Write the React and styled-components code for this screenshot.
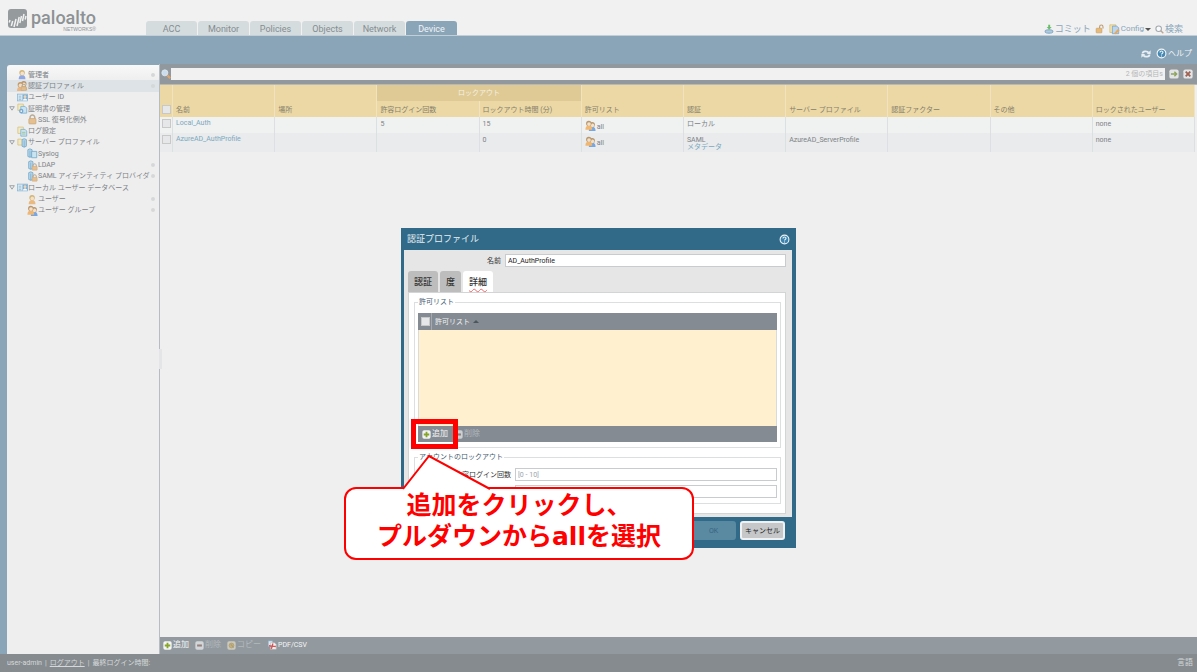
import React, { useState } from 'react';
import styled, { createGlobalStyle } from 'styled-components';

const navTabs = ['ACC', 'Monitor', 'Policies', 'Objects', 'Network', 'Device'];

const treeItems = [
  { label: '管理者', icon: 'admin', dot: true },
  { label: '認証プロファイル', icon: 'authProfile', dot: true },
  { label: 'ユーザー ID', icon: 'card' },
  { label: '証明書の管理', icon: 'certs', open: true },
  { label: 'SSL 復号化例外', icon: 'lock', child: true },
  { label: 'ログ設定', icon: 'logs' },
  { label: 'サーバー プロファイル', icon: 'servers', open: true },
  { label: 'Syslog', icon: 'syslog', child: true },
  { label: 'LDAP', icon: 'serverLock', child: true, dot: true },
  { label: 'SAML アイデンティティ プロバイダ', icon: 'serverLock', child: true, dot: true },
  { label: 'ローカル ユーザー データベース', icon: 'card', open: true },
  { label: 'ユーザー', icon: 'user', child: true, dot: true },
  { label: 'ユーザー グループ', icon: 'group', child: true, dot: true },
];

const profiles = [
  { name: 'Local_Auth', attempts: '5', time: '15', auth: 'ローカル', server: '', locked: 'none' },
  { name: 'AzureAD_AuthProfile', attempts: '', time: '0', auth: 'SAML', meta: 'メタデータ', server: 'AzureAD_ServerProfile', locked: 'none' },
];

const Person = ({ x = 0, y = 0, hair = '#c9a04a', body = '#6f8fe0' }) => (
  <g transform={`translate(${x} ${y})`}>
    <path d="M.5 11.500C.5 8 2 6.500 4.500 6.500S8.500 8 8.500 11.500z" fill={body} />
    <circle cx="4.500" cy="4" r="3.200" fill={hair} />
    <circle cx="4.700" cy="4.800" r="2.200" fill="#f6dcbc" />
  </g>
);

const Padlock = ({ x = 0, y = 0 }) => (
  <g transform={`translate(${x} ${y})`}>
    <path d="M1.500 4V2.500a2 2 0 0 1 4 0V4" fill="none" stroke="#a8957a" strokeWidth="1.200" />
    <rect x=".5" y="3.500" width="6" height="4.500" rx=".6" fill="#e3b070" stroke="#b98f58" strokeWidth=".6" />
  </g>
);

const Server = ({ x = 0, y = 0 }) => (
  <g transform={`translate(${x} ${y})`}>
    <path d="M.5 1.500 3 .5l2.500 1v8L3 10.500l-2.500-1z" fill="#a9d0ea" stroke="#3f8cba" strokeWidth=".9" />
    <path d="M3 2.500v8" stroke="#3f8cba" strokeWidth=".8" />
  </g>
);

const Sheets = () => (
  <g strokeWidth=".9">
    <path d="M.5.8h6.500v7.500H.5z" fill="#f7e9b4" stroke="#cdb258" />
    <path d="M4 3.500h5l2 2v6H4z" fill="#bfe0f2" stroke="#4f97c2" />
  </g>
);

const drawings = {
  admin: <Person x={1} />,
  user: <Person x={1} body="#e8a85c" />,
  authProfile: <><Person x={3} hair="#a87a44" body="#e8a050" /><Person x={-1} y={1} hair="#b98247" body="#f0a860" /><Padlock x={4} y={4} /></>,
  group: <><Person x={3.500} y={1} hair="#a87a44" body="#4f90e0" /><Person x={-.5} y={-.5} hair="#a87a44" body="#f0a548" /></>,
  card: (
    <>
      <rect x="0" y="2" width="12" height="8" fill="#d8eaf5" stroke="#6aa5cd" strokeWidth=".9" />
      <path d="M1.500 4.500h3M1.500 6.500h3M1.500 8.500h3" stroke="#5a9cc8" strokeWidth=".8" />
      <rect x="6" y="2.500" width="6" height="7" fill="#5796c4" />
      <circle cx="9" cy="5" r="1.700" fill="#f0cfa8" />
      <path d="M6.500 9.500c.3-3 4.700-3 5 0z" fill="#fff" />
    </>
  ),
  certs: <><Sheets /><circle cx="4.500" cy="9" r="2.600" fill="#4f93cb" /><circle cx="4.500" cy="9" r="1" fill="#fff" /></>,
  logs: <><Sheets /><path d="M5.500 7h4M5.500 9h4" stroke="#7fb46f" strokeWidth="1" /></>,
  lock: <g transform="translate(1 0) scale(1.400)"><Padlock /></g>,
  servers: <><path d="M.5 2h4l1 1h5v6h-10z" fill="#f7e6b0" stroke="#cdb258" strokeWidth=".9" /><Server x={5} y={1} /></>,
  syslog: <><Server /><path d="M5 3.500h6v7.500H5z" fill="#bfe0f2" stroke="#3f8cba" strokeWidth=".9" /></>,
  serverLock: <><Server x={1} /><Padlock x={5} y={3.500} /></>,
  add: (
    <>
      <rect x="0" y="0" width="12" height="12" rx="2.500" fill="#fff" />
      <path d="M6 2v8M2 6h8" stroke="#86a81e" strokeWidth="2.600" />
    </>
  ),
  remove: (
    <>
      <rect x="0" y="0" width="12" height="12" rx="2.500" fill="#fff" />
      <rect x="2.500" y="4.500" width="7" height="3" fill="#9a7467" />
    </>
  ),
  copy: (
    <>
      <rect x="0" y="0" width="12" height="12" rx="2.500" fill="#f4ead0" />
      <circle cx="6" cy="6" r="3.500" fill="#e8bd55" stroke="#b89b5c" />
      <path d="M5 4l4 5" stroke="#8e877a" />
    </>
  ),
  pdf: (
    <>
      <path d="M1 .5h6v8H1z" fill="#e8f1f7" stroke="#7ba5c4" strokeWidth=".9" />
      <path d="M4 3h5l2.500 2v6.500H4z" fill="#fff" stroke="#b8b8b8" strokeWidth=".7" />
      <path d="M2 7c3 1 5 0 9 1M7 4c0 3-1 5-2 7" stroke="#dc4c4c" strokeWidth="1.800" fill="none" />
    </>
  ),
  go: (
    <>
      <rect x="0" y="0" width="12" height="12" rx="2.500" fill="#fff" />
      <path d="M2 6h7M6.500 3 9.500 6l-3 3" stroke="#8ea84b" strokeWidth="1.800" fill="none" />
    </>
  ),
  clear: (
    <>
      <rect x="0" y="0" width="12" height="12" rx="2.500" fill="#fff" />
      <path d="M3 3l6 6M9 3l-6 6" stroke="#a3503c" strokeWidth="2.400" />
    </>
  ),
  commit: (
    <>
      <path d="M1 8.500c0-2 10-2 10 0v1.500c0 2-10 2-10 0z" fill="#a8c6de" stroke="#5c8db3" strokeWidth="1" />
      <path d="M5 .5h2.500v3H9.500L6.200 7 3 3.500h2z" fill="#5cb85a" />
    </>
  ),
  unlock: (
    <>
      <path d="M5.500 5V3a2.200 2.200 0 0 1 4.400 0v2.500" fill="none" stroke="#b9925f" strokeWidth="1.400" />
      <rect x="1" y="5" width="7.500" height="6" rx=".8" fill="#e5b56c" stroke="#b98a4b" strokeWidth=".7" />
    </>
  ),
  config: (
    <>
      <path d="M.5.5h7v9h-7z" fill="#f6e5a7" stroke="#cfae54" strokeWidth=".8" />
      <path d="M3.500 2h5l2.500 2v7H3.500z" fill="#b6d2ec" stroke="#5c92c0" strokeWidth=".8" />
      <path d="M5.500 10.500 10 5.500l2 1.500-4.500 4.500z" fill="#e8a04a" />
    </>
  ),
  find: (
    <>
      <path d="M7.500 7.500 11.500 11.500" stroke="#b99f86" strokeWidth="2" />
      <circle cx="4.800" cy="4.800" r="4" fill="#fafcfe" stroke="#9aa0a6" strokeWidth="1.500" />
    </>
  ),
  lens: (
    <>
      <circle cx="4.500" cy="4.500" r="3.900" fill="#cfe5f8" stroke="#e6edf2" strokeWidth="1.200" />
      <path d="M7.800 7.800 11.500 11.500" stroke="#e8a468" strokeWidth="2.800" />
    </>
  ),
  refresh: (
    <g fill="none" stroke="#f4f7f9" strokeWidth="2.400">
      <path d="M1.500 5.500c0-3.500 6-4 8-1M10.500 6.500c0 3.500-6 4-8 1" />
      <path d="M12 1v5H7zM0 11V6h5z" fill="#f4f7f9" stroke="none" />
    </g>
  ),
  help: (
    <>
      <circle cx="6" cy="6" r="5.200" fill="#3d86b4" stroke="#fff" strokeWidth="1.300" />
      <path d="M4.200 4.800c0-2.400 3.600-2.300 3.600-.2C7.800 6 6 5.900 6 7.300M6 8.400v1.200" fill="none" stroke="#fff" strokeWidth="1.300" />
    </>
  ),
};

const Icon = ({ name, size = 10, faded }) => (
  <Glyph width={size} height={size} viewBox="-0.5 -0.5 13 13" $faded={faded} aria-hidden="true">
    {drawings[name]}
  </Glyph>
);

export default function App() {
  const [selected, setSelected] = useState('認証プロファイル');
  const [profileName, setProfileName] = useState('AD_AuthProfile');

  return (
    <Page>
      <GlobalStyle />
      <Header>
        <Logo>
          <svg width="20" height="20" viewBox="0 0 20 20" aria-hidden="true">
            <rect width="19" height="19" rx="3" fill="#959a9d" />
            <path d="M1.200 13.500l.8-2.500M3.300 17l1.400-5M6 18l2-8M9 17l2.200-9M11.800 14l1.700-7M14.500 12l1.500-7M17.200 10.500l.8-3.500" stroke="#f1f1f1" strokeWidth="1.500" fill="none" />
          </svg>
          <Brand>paloalto<BrandSub>NETWORKS®</BrandSub></Brand>
        </Logo>
        <NavTabs>
          {navTabs.map(tab => (
            <NavTab key={tab} $active={tab === 'Device'}>{tab}</NavTab>
          ))}
        </NavTabs>
        <HeaderTools>
          <ToolLink href="#commit"><Icon name="commit" />コミット</ToolLink>
          <ToolLink href="#locks" aria-label="ロック"><Icon name="unlock" /></ToolLink>
          <ToolLink href="#config"><Icon name="config" size={11} /><ConfigText>Config</ConfigText><Caret /></ToolLink>
          <ToolLink href="#search"><Icon name="find" size={9} />検索</ToolLink>
        </HeaderTools>
      </Header>

      <Band>
        <BandButton aria-label="更新"><Icon name="refresh" /></BandButton>
        <BandButton><Icon name="help" size={11} />ヘルプ</BandButton>
      </Band>

      <Workspace>
        <Sidebar>
          <Tree>
            {treeItems.map(item => (
              <TreeItem key={item.label} $selected={item.label === selected} $child={item.child}>
                <Arrow>{item.open && <svg width="6" height="5" viewBox="0 0 6 5"><path d="M.7.7h4.600L3 4.200z" fill="none" stroke="#8b9196" strokeWidth=".8" /></svg>}</Arrow>
                <TreeButton onClick={() => setSelected(item.label)}>
                  <Icon name={item.icon} size={11} faded />
                  {item.label}
                </TreeButton>
                {item.dot && <Dot />}
              </TreeItem>
            ))}
          </Tree>
        </Sidebar>
        <Splitter><Handle /></Splitter>

        <Main>
          <SearchBar>
            <Icon name="lens" />
            <SearchBox>
              <SearchInput aria-label="検索フィルタ" />
              <Count>2 個の項目s</Count>
            </SearchBox>
            <SearchActions>
              <IconButton aria-label="適用"><Icon name="go" faded /></IconButton>
              <IconButton aria-label="クリア"><Icon name="clear" faded /></IconButton>
            </SearchActions>
          </SearchBar>

          <TableArea>
            <Table>
              <colgroup><CheckCol /><col span="10" /></colgroup>
              <thead>
                <tr>
                  <Th rowSpan="2" $check><Check type="checkbox" aria-label="すべて選択" /></Th>
                  <Th rowSpan="2">名前</Th>
                  <Th rowSpan="2">場所</Th>
                  <GroupTh colSpan="2">ロックアウト</GroupTh>
                  <Th rowSpan="2">許可リスト</Th>
                  <Th rowSpan="2">認証</Th>
                  <Th rowSpan="2">サーバー プロファイル</Th>
                  <Th rowSpan="2">認証ファクター</Th>
                  <Th rowSpan="2">その他</Th>
                  <Th rowSpan="2">ロックされたユーザー</Th>
                </tr>
                <tr>
                  <Th>許容ログイン回数</Th>
                  <Th>ロックアウト時間 (分)</Th>
                </tr>
              </thead>
              <tbody>
                {profiles.map(row => (
                  <Row key={row.name}>
                    <Td $check><Check type="checkbox" aria-label={row.name} /></Td>
                    <Td><CellLink href="#profile">{row.name}</CellLink></Td>
                    <Td />
                    <Td>{row.attempts}</Td>
                    <Td>{row.time}</Td>
                    <Td><AllowAll><Icon name="group" size={11} faded />all</AllowAll></Td>
                    <Td>{row.auth}{row.meta && <CellLink href="#metadata">{row.meta}</CellLink>}</Td>
                    <Td>{row.server}</Td>
                    <Td />
                    <Td />
                    <Td>{row.locked}</Td>
                  </Row>
                ))}
              </tbody>
            </Table>
          </TableArea>

          <Toolbar>
            <ToolbarButton><Icon name="add" size={9} />追加</ToolbarButton>
            <ToolbarButton disabled><Icon name="remove" size={9} />削除</ToolbarButton>
            <ToolbarButton disabled><Icon name="copy" size={9} />コピー</ToolbarButton>
            <ToolbarButton><Icon name="pdf" /><ExportText>PDF/CSV</ExportText></ToolbarButton>
          </Toolbar>
        </Main>
      </Workspace>

      <Footer>
        <span>user-admin</span>
        <span>|</span>
        <FooterLink href="#logout">ログアウト</FooterLink>
        <span>|</span>
        <span>最終ログイン時間:</span>
        <Language href="#language">言語</Language>
      </Footer>

      <Dialog role="dialog" aria-labelledby="dialog-title">
        <DialogHeader>
          <DialogTitle id="dialog-title">認証プロファイル</DialogTitle>
          <IconButton aria-label="ヘルプ"><Icon name="help" size={11} /></IconButton>
        </DialogHeader>
        <DialogBody>
          <NameRow>
            <Label htmlFor="profile-name">名前</Label>
            <Input id="profile-name" value={profileName} onChange={e => setProfileName(e.target.value)} />
          </NameRow>
          <DialogTabs>
            <DialogTab>認証</DialogTab>
            <DialogTab>度</DialogTab>
            <DialogTab $active><Misspelt>詳細</Misspelt></DialogTab>
          </DialogTabs>
          <Panel>
            <Group>
              <Legend>許可リスト</Legend>
              <GridHead>
                <GridCheck><Check type="checkbox" aria-label="許可リストをすべて選択" /></GridCheck>
                <span>許可リスト</span>
                <SortMark />
              </GridHead>
              <GridBody />
              <GridFoot>
                <ToolbarButton><Icon name="add" size={9} />追加</ToolbarButton>
                <ToolbarButton disabled><Icon name="remove" size={9} />削除</ToolbarButton>
              </GridFoot>
            </Group>
            <Group>
              <Legend>アカウントのロックアウト</Legend>
              <Fields>
                <Label htmlFor="attempts">許容ログイン回数</Label>
                <Input id="attempts" placeholder="[0 - 10]" />
                <LockTimeInput aria-label="ロックアウト時間 (分)" />
              </Fields>
            </Group>
          </Panel>
        </DialogBody>
        <DialogFooter>
          <DialogButton disabled>OK</DialogButton>
          <DialogButton>キャンセル</DialogButton>
        </DialogFooter>

        <Highlight />
        <Callout>
          追加をクリックし、<br />プルダウンからallを選択
          <Pointer width="92" height="36" viewBox="0 0 92 36" aria-hidden="true">
            <path d="M2 36V34L28 1 89 34v2z" fill="#fff" />
            <path d="M2 34 28 1 89 34" fill="none" stroke="#f00" strokeWidth="2" />
          </Pointer>
        </Callout>
      </Dialog>
    </Page>
  );
}

const GlobalStyle = createGlobalStyle`
  * {
    box-sizing: border-box;
  }
  body {
    margin: 0;
    background: #efefef;
    color: #7d8286;
    font: 7px/10px Roboto, "Noto Sans CJK JP", sans-serif;
  }
  button, input {
    font: inherit;
    color: inherit;
  }
  button {
    border: 0;
    padding: 0;
    background: none;
    white-space: nowrap;
  }
  a {
    color: inherit;
    text-decoration: none;
  }
`;

const Page = styled.div`
  position: relative;
  display: flex;
  flex-direction: column;
  min-height: 100vh;
`;

const Glyph = styled.svg`
  flex: none;
  display: block;
  opacity: ${p => (p.$faded ? 0.75 : 0.9)};
`;

const Header = styled.header`
  display: flex;
  align-items: flex-end;
  height: 36px;
  background: #f1f1f1;
  border-bottom: 1px solid #c3cfd8;
`;

const Logo = styled.div`
  display: flex;
  align-items: flex-start;
  gap: 3px;
  width: 146px;
  height: 26px;
  padding-left: 8px;
`;

const Brand = styled.div`
  display: flex;
  flex-direction: column;
  color: #8d9295;
  font: 500 18px/18px Roboto, sans-serif;
`;

const BrandSub = styled.small`
  align-self: flex-end;
  font: 5px/5px "Liberation Sans", sans-serif;
`;

const NavTabs = styled.nav`
  display: flex;
  gap: 1px;
`;

const NavTab = styled.button`
  width: 51px;
  height: 14px;
  border-radius: 3px 3px 0 0;
  background: ${p => (p.$active ? '#8ba5b8' : '#d5dcde')};
  color: ${p => (p.$active ? '#f1f4f6' : '#848c90')};
  font-size: 9px;
  line-height: 16px;
`;

const HeaderTools = styled.div`
  display: flex;
  align-items: center;
  gap: 4px;
  margin-left: auto;
  padding: 0 14px 0 0;
`;

const ToolLink = styled.a`
  display: flex;
  align-items: center;
  gap: 1px;
  color: #88a5ba;
  font-size: 9px;
  line-height: 12px;
`;

const ConfigText = styled.span`
  font-size: 8px;
`;

const Caret = styled.i`
  border: 3px solid transparent;
  border-top-color: #555;
  border-bottom: 0;
`;

const Band = styled.div`
  display: flex;
  justify-content: flex-end;
  align-items: center;
  gap: 5px;
  height: 28px;
  padding: 7px 5px 0 0;
  background: #8ba5b8;
`;

const BandButton = styled.button`
  display: flex;
  align-items: center;
  gap: 1px;
  color: #f1f4f6;
  font-size: 8px;
`;

const Workspace = styled.div`
  flex: 1;
  display: flex;
  padding-left: 7px;
  background: #8ba5b8;
`;

const Sidebar = styled.aside`
  flex: none;
  width: 152px;
  margin-top: 1px;
  padding-top: 4px;
  border-radius: 3px 0 0 0;
  background: linear-gradient(#f8f8f8, #eeeeef 16px);
`;

const Tree = styled.ul`
  display: grid;
  grid-auto-rows: 1fr;
  min-height: 147px;
  margin: 0;
  padding: 0;
  list-style: none;
`;

const TreeItem = styled.li`
  display: flex;
  align-items: center;
  padding: 0 4px 0 ${p => (p.$child ? 12 : 2)}px;
  background: ${p => (p.$selected ? '#dde3e6' : 'transparent')};
`;

const Arrow = styled.span`
  display: flex;
  width: 8px;
`;

const TreeButton = styled.button`
  display: flex;
  align-items: center;
`;

const Dot = styled.i`
  width: 4px;
  height: 4px;
  margin-left: auto;
  border-radius: 50%;
  background: #d5d7d8;
`;

const Splitter = styled.div`
  display: flex;
  align-items: center;
  width: 1px;
  background: #b5bcc2;
`;

const Handle = styled.i`
  flex: none;
  z-index: 1;
  width: 3px;
  height: 20px;
  background: #e3e5e7;
`;

const Main = styled.main`
  flex: 1;
  display: flex;
  flex-direction: column;
  min-width: 0;
  background: #efefef;
`;

const SearchBar = styled.div`
  display: flex;
  align-items: center;
  height: 21px;
  padding: 0 4px 1px 1px;
  background: #92999e;
  border-bottom: 1px solid #b8b9b3;
`;

const SearchBox = styled.div`
  flex: 1;
  display: flex;
  align-items: center;
  height: 12px;
  padding-right: 2px;
  background: #f1f1f1;
`;

const SearchInput = styled.input`
  flex: 1;
  min-width: 0;
  height: 12px;
  border: 0;
  padding: 0 2px;
  background: none;
`;

const Count = styled.span`
  color: #b4b7b9;
`;

const SearchActions = styled.div`
  display: flex;
  gap: 4px;
  padding-left: 4px;
`;

const IconButton = styled.button`
  display: flex;
`;

const TableArea = styled.div`
  flex: 1;
  padding-right: 2px;
`;

const Table = styled.table`
  width: 100%;
  table-layout: fixed;
  border-collapse: separate;
  border-spacing: 0;
`;

const CheckCol = styled.col`
  width: 13px;
`;

const Th = styled.th`
  height: 16px;
  padding: 0 0 ${p => (p.$check ? '3px 2px' : '2px 3px')};
  border-right: 1px solid #f1e3bf;
  background: #ecd8a5;
  color: #857f6c;
  font-weight: 400;
  line-height: 10px;
  text-align: left;
  vertical-align: bottom;
  white-space: nowrap;
`;

const GroupTh = styled(Th)`
  padding: 0;
  background: #dfca95;
  color: #f5f1e3;
  text-align: center;
  vertical-align: middle;
`;

const Row = styled.tr`
  background: #f0f1f1;

  &:nth-child(even) {
    background: #e9ebec;
  }
`;

const Td = styled.td`
  height: 16px;
  padding: ${p => (p.$check ? '2px 0 0 2px' : '3px 0 0 3px')};
  border-right: 1px solid #dde0e3;
  line-height: 8px;
  vertical-align: top;
  white-space: nowrap;

  ${Row}:nth-child(even) & {
    height: 19px;
  }
`;

const CellLink = styled.a`
  display: block;
  color: #7ba8bf;
  line-height: 7px;
`;

const AllowAll = styled.span`
  display: flex;
  align-items: flex-end;
  gap: 1px;
`;

const Check = styled.input`
  appearance: none;
  display: block;
  width: 9px;
  height: 9px;
  margin: 0;
  border: 1px solid #c8c8c8;
  background: #e6e7e8;
`;

const Toolbar = styled.div`
  display: flex;
  align-items: center;
  gap: 6px;
  height: 17px;
  padding: 0 0 1px 3px;
  background: #929a9f;
`;

const ToolbarButton = styled.button`
  display: flex;
  align-items: center;
  gap: 1px;
  color: ${p => (p.disabled ? '#b3b9bd' : '#f4f5f6')};
  font-size: 8px;

  &:disabled svg {
    opacity: 0.6;
  }
`;

const ExportText = styled.span`
  font-size: 7px;
`;

const Footer = styled.footer`
  display: flex;
  align-items: center;
  gap: 3px;
  height: 18px;
  padding: 0 4px 0 7px;
  background: #858b8e;
  color: #d5d9db;
`;

const FooterLink = styled.a`
  text-decoration: underline;
`;

const Language = styled.a`
  margin-left: auto;
  font-size: 8px;
`;

/* The dialog floats over the page */
const Dialog = styled.section`
  position: absolute;
  top: 228px;
  left: 0;
  right: 0;
  width: 395px;
  margin: 0 auto;
  background: #306a88;
  color: #333;
`;

const DialogHeader = styled.div`
  display: flex;
  align-items: center;
  justify-content: space-between;
  height: 22px;
  padding: 0 6px;
`;

const DialogTitle = styled.h2`
  margin: 0;
  color: #e9f0f4;
  font-size: 9px;
  font-weight: 400;
`;

const DialogBody = styled.div`
  margin: 0 4px 0 3px;
  padding: 4px 6px 3px 4px;
  background: #e6e6e6;
`;

const NameRow = styled.div`
  display: grid;
  grid-template-columns: 93px 1fr;
  align-items: center;
  gap: 4px;
`;

const Label = styled.label`
  text-align: right;
  white-space: nowrap;
`;

const Input = styled.input`
  min-width: 0;
  height: 13px;
  border: 1px solid #c9cccf;
  padding: 0 2px;
  background: #fff;
  color: #222;

  &::placeholder {
    color: #9aa5ae;
  }
`;

const LockTimeInput = styled(Input)`
  grid-column: 2;
`;

const DialogTabs = styled.div`
  display: flex;
  gap: 2px;
  margin-top: 4px;
`;

const DialogTab = styled.button`
  height: 21px;
  padding: 0 6px;
  border-radius: 3px 3px 0 0;
  background: ${p => (p.$active ? '#fff' : '#bdbdbd')};
  font-size: 9px;
  font-weight: 500;
`;

const Misspelt = styled.span`
  text-decoration: underline wavy #e66 1px;
  text-underline-offset: 3px;
`;

const Panel = styled.div`
  display: flex;
  flex-direction: column;
  gap: 4px;
  padding: 4px 4px 9px 5px;
  border: 1px solid #d2d4d6;
  background: #fff;
`;

const Group = styled.fieldset`
  min-width: 0;
  margin: 0;
  padding: 6px 3px 5px;
  border: 1px solid #dcdee0;
`;

const Legend = styled.legend`
  height: 10px;
  padding: 0 1px;
  color: #3f5b70;
`;

const GridHead = styled.div`
  display: flex;
  align-items: center;
  gap: 3px;
  height: 17px;
  padding-left: 3px;
  background: #848b92;
  color: #f3f4f5;
`;

const GridCheck = styled.span`
  display: flex;
  align-items: center;
  height: 17px;
  padding-right: 1px;
  border-right: 1px solid #a3a9ae;
`;

const SortMark = styled.i`
  border: 3px solid transparent;
  border-bottom-color: #4d565d;
  border-top: 0;
`;

const GridBody = styled.div`
  height: 96px;
  border: solid #d8dadb;
  border-width: 0 1px;
  background: #fff0d0;
`;

const GridFoot = styled.div`
  display: flex;
  align-items: center;
  gap: 6px;
  height: 16px;
  padding-left: 4px;
  background: #848b92;
`;

const Fields = styled.div`
  display: grid;
  grid-template-columns: 93px 1fr;
  align-items: center;
  gap: 4px;
`;

const DialogFooter = styled.div`
  display: flex;
  justify-content: flex-end;
  gap: 4px;
  padding: 4px 11px 8px;
`;

const DialogButton = styled.button`
  width: 45px;
  height: 19px;
  border: 2px solid ${p => (p.disabled ? '#5a89a2' : '#f0f1f2')};
  border-radius: 3px;
  background: ${p => (p.disabled ? '#5a89a2' : '#c5c7c9')};
  color: ${p => (p.disabled ? '#35657f' : '#222')};
`;

const Highlight = styled.div`
  position: absolute;
  top: 191px;
  left: 10px;
  width: 47px;
  height: 30px;
  border: 5px solid #f00;
`;

const Callout = styled.div`
  position: absolute;
  top: 259px;
  left: -57px;
  width: 350px;
  height: 73px;
  padding-top: 1px;
  border: 2px solid #f00;
  border-radius: 12px;
  background: #fff;
  color: #f00;
  font: bold 25px/31px "DejaVu Sans", "Noto Sans CJK JP", sans-serif;
  text-align: center;
`;

const Pointer = styled.svg`
  position: absolute;
  top: -34px;
  left: 55px;
`;
